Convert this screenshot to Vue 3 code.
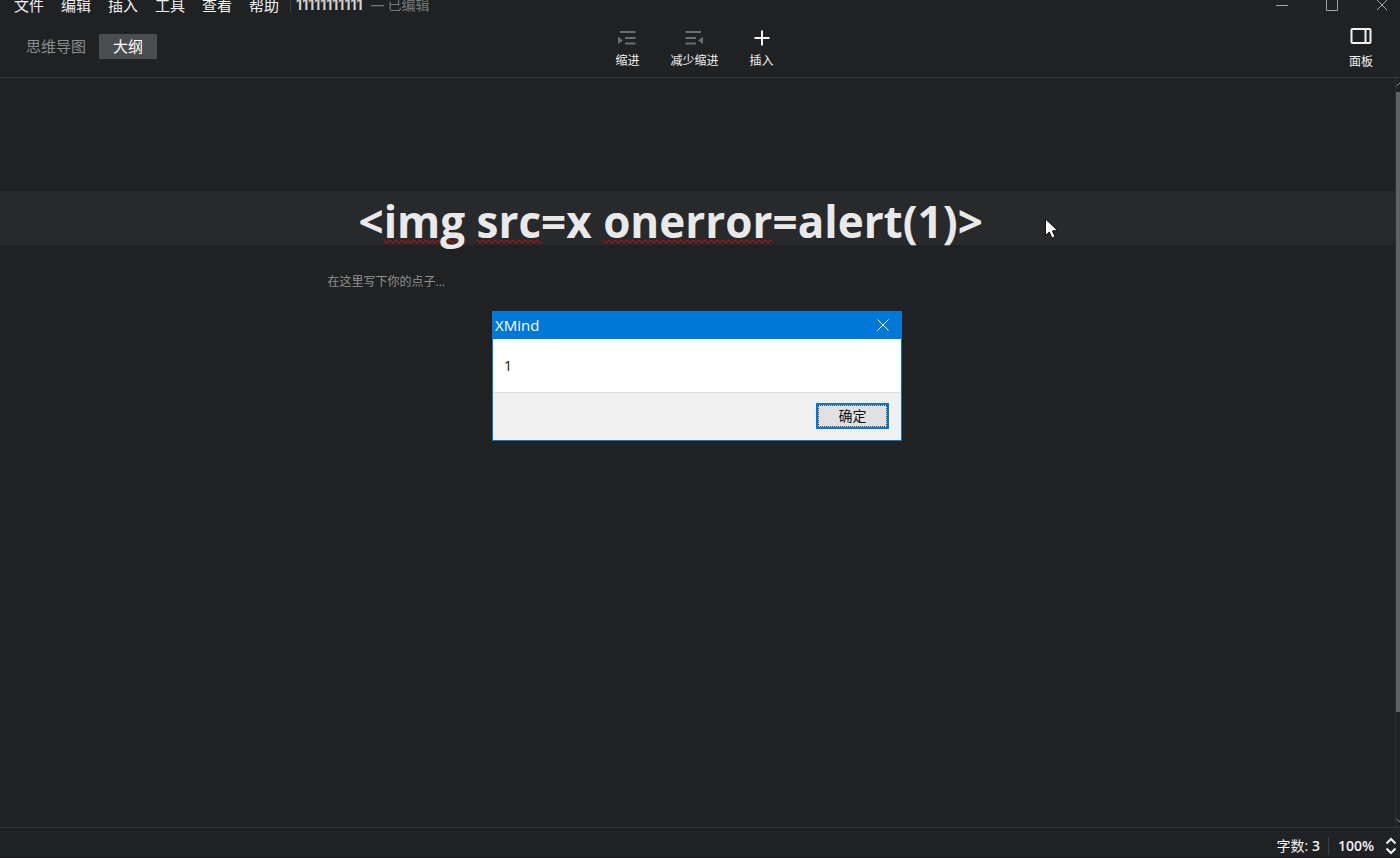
<script setup>
import { ref } from 'vue'

const menus = ['文件', '编辑', '插入', '工具', '查看', '帮助']
const dialogOpen = ref(true)
const view = ref('outline')
</script>

<template>
  <div class="app">
    <header class="top">
      <div class="titlebar">
        <nav class="menus">
          <button v-for="m in menus" :key="m" type="button">{{ m }}</button>
        </nav>
        <div class="doc">
          <strong>11111111111</strong>
          <span class="dash">—</span>
          <span>已编辑</span>
        </div>
        <div class="window-buttons">
          <button type="button" aria-label="最小化">
            <svg width="14" height="14" viewBox="0 0 14 14"><path d="M1 7.5H13" /></svg>
          </button>
          <button type="button" aria-label="最大化">
            <svg width="14" height="14" viewBox="0 0 14 14"><path d="M1.500 1.500H12.500V12.500H1.500Z" /></svg>
          </button>
          <button type="button" aria-label="关闭">
            <svg width="14" height="14" viewBox="0 0 14 14"><path d="M2 2L12 12M12 2L2 12" /></svg>
          </button>
        </div>
      </div>

      <div class="toolbar">
        <div class="tabs">
          <button type="button" :class="{ active: view === 'map' }" @click="view = 'map'">思维导图</button>
          <button type="button" :class="{ active: view === 'outline' }" @click="view = 'outline'">大纲</button>
        </div>
        <div class="tools">
          <button type="button">
            <svg class="dim" width="20" height="18" viewBox="0 0 20 18">
              <path d="M3 3H18.500M8 9H18.500M8 14.500H18.500" />
              <path class="solid" d="M1 7.500L6 11.500L1 15Z" />
            </svg>
            缩进
          </button>
          <button type="button">
            <svg class="dim" width="20" height="18" viewBox="0 0 20 18">
              <path d="M1.500 3H17M1.500 9H12M1.500 14.500H12" />
              <path class="solid" d="M19 7.500L14 11.500L19 15Z" />
            </svg>
            减少缩进
          </button>
          <button type="button">
            <svg width="20" height="18" viewBox="0 0 20 18"><path d="M10 1.500V16.500M2.500 9H17.500" /></svg>
            插入
          </button>
        </div>
        <div class="tools panel">
          <button type="button">
            <svg width="22" height="18" viewBox="0 0 22 18">
              <path d="M2.500 2H19.500Q20.500 2 20.500 3V15Q20.500 16 19.500 16H2.500Q1.500 16 1.500 15V3Q1.500 2 2.500 2ZM15.500 2V16" />
            </svg>
            面板
          </button>
        </div>
      </div>
    </header>

    <main class="workspace">
      <div class="outline">
        <div class="title-row">
          <h1>&lt;<span class="misspelt">img</span> <span class="misspelt">src</span>=x <span class="misspelt">onerror</span>=alert(1)&gt;</h1>
        </div>
        <p class="hint">在这里写下你的点子...</p>
      </div>
      <div class="scrollbar">
        <svg width="4" height="14" viewBox="0 0 4 14"><path d="M0.500 8L4 5" /></svg>
        <div class="track"><div class="thumb"></div></div>
        <svg width="4" height="14" viewBox="0 0 4 14"><path d="M0.500 6L4 9" /></svg>
      </div>

      <section v-if="dialogOpen" class="dialog" role="alertdialog" aria-labelledby="dialog-title">
        <div class="dialog-head">
          <span id="dialog-title">XMind</span>
          <button type="button" aria-label="关闭" @click="dialogOpen = false">
            <svg width="14" height="14" viewBox="0 0 14 14"><path d="M1.500 1.500L12.500 12.500M12.500 1.500L1.500 12.500" /></svg>
          </button>
        </div>
        <div class="dialog-body">1</div>
        <div class="dialog-foot">
          <button type="button" @click="dialogOpen = false"><span>确定</span></button>
        </div>
      </section>

      <svg class="pointer" width="16" height="22" viewBox="0 0 16 22">
        <path d="M1.500 1L1.500 17.500L5.300 14L8 20L11 18.700L8.400 12.900L13.500 12.500Z" />
      </svg>
    </main>

    <footer class="status">
      <span>字数: <b>3</b></span>
      <button type="button" class="zoom">
        <b>100%</b>
        <svg width="12" height="18" viewBox="0 0 12 18"><path d="M1.500 6.500L6 2L10.500 6.500M1.500 11.500L6 16L10.500 11.500" /></svg>
      </button>
    </footer>
  </div>
</template>

<style>
body {
  margin: 0;
  background: #1f2122;
}
</style>

<style scoped>
.app {
  display: flex;
  flex-direction: column;
  min-height: 100vh;
  overflow: hidden;
  background: #1f2122;
  color: #f2f2f2;
  font-family: "Open Sans", "Noto Sans CJK SC", sans-serif;
  font-size: 15px;
}

button {
  margin: 0;
  padding: 0;
  border: 0;
  background: none;
  color: inherit;
  font: inherit;
}

svg {
  display: block;
  flex: none;
  fill: none;
  stroke: currentColor;
}

.top {
  border-bottom: 1px solid #343637;
}

.titlebar {
  display: flex;
  align-items: center;
  height: 10px;
}

.menus {
  display: flex;
  gap: 17px;
  padding: 0 11px 0 14px;
  border-right: 1px solid #3b3d3e;
}

.menus button {
  height: 14px;
  line-height: 14px;
}

.doc {
  display: flex;
  align-items: center;
  padding-left: 5px;
  color: #77797a;
  font-size: 14px;
  line-height: 12px;
}

.doc strong {
  color: #cfcfcf;
  font-family: Inter, sans-serif;
  font-size: 14px;
}

.dash {
  padding: 0 3px 0 8px;
}

.window-buttons {
  display: flex;
  gap: 36px;
  margin-left: auto;
  padding-right: 11px;
  color: #a5a5a5;
}

.toolbar {
  display: grid;
  grid-template-columns: 1fr auto 1fr;
  height: 67px;
}

.tabs {
  display: flex;
  align-items: flex-start;
  padding: 24px 0 0 13px;
}

.tabs button {
  height: 25px;
  padding: 0 13px;
  color: #8b8d8e;
  line-height: 25px;
}

.tabs .active {
  padding: 0 14px;
  background: #4b4d4e;
  color: #fff;
}

.tools {
  display: flex;
  gap: 31px;
  padding: 19px 11px 0 0;
  font-size: 12px;
  line-height: 18px;
}

.tools button {
  display: flex;
  flex-direction: column;
  align-items: center;
  gap: 5px;
}

.tools svg {
  stroke-width: 2;
}

.tools .dim {
  color: #6b6d6e;
}

.tools .solid {
  fill: currentColor;
  stroke: none;
}

.panel {
  justify-self: end;
  padding: 17px 27px 0 0;
}

.panel button {
  gap: 8px;
}

.workspace {
  position: relative;
  display: flex;
  flex: 1;
}

.outline {
  flex: 1;
  padding-top: 113px;
}

.title-row {
  height: 54px;
  background: #28292b;
}

h1,
.hint {
  box-sizing: border-box;
  max-width: 740px;
  margin: 0 auto;
}

h1 {
  padding-left: 31px;
  color: #e9e9e9;
  font-size: 44px;
  font-weight: 700;
  line-height: 60px;
  white-space: nowrap;
}

.misspelt {
  text-decoration: spelling-error;
}

.hint {
  padding-top: 27px;
  color: #909293;
  font-size: 12px;
  line-height: 20px;
}

.scrollbar {
  display: flex;
  flex-direction: column;
  width: 4px;
  border-left: 1px solid #2c2e2f;
  color: #8a8a8a;
}

.track {
  flex: 1;
}

.thumb {
  height: 86%;
  background: #606164;
}

.dialog {
  position: absolute;
  top: 233px;
  left: calc(50% - 208px);
  box-sizing: border-box;
  width: 410px;
  border: 1px solid #0078d7;
  background: #fff;
  color: #111;
}

.dialog-head {
  display: flex;
  align-items: center;
  justify-content: space-between;
  height: 26px;
  padding: 0 11px 1px 2px;
  background: #0078d7;
  color: #fff;
}

.dialog-body {
  padding: 0 11px;
  font-size: 14px;
  line-height: 53px;
}

.dialog-foot {
  display: flex;
  justify-content: flex-end;
  padding: 10px 12px 11px;
  border-top: 1px solid #dfdfdf;
  background: #f0f0f0;
}

.dialog-foot button {
  box-sizing: border-box;
  width: 73px;
  height: 26px;
  border: 2px solid #0078d7;
  background: #e1e1e1;
  font-size: 14px;
  line-height: 20px;
}

.dialog-foot span {
  display: block;
  border: 1px dotted #444;
}

.pointer {
  position: absolute;
  top: 140px;
  left: calc(50% + 344px);
}

.pointer path {
  fill: #fff;
  stroke: #111;
}

.status {
  display: flex;
  align-items: center;
  justify-content: flex-end;
  height: 31px;
  padding: 7px 3px 0 0;
  box-sizing: border-box;
  border-top: 1px solid #343637;
  border-bottom: 1px solid #1b171c;
  font-size: 14px;
  line-height: 16px;
}

.status b {
  font-weight: 600;
}

.zoom {
  display: flex;
  align-items: center;
  gap: 11px;
  margin-left: 8px;
  padding-left: 9px;
  border-left: 1px solid #3b3d3e;
}

.zoom svg {
  stroke-width: 2;
}
</style>
